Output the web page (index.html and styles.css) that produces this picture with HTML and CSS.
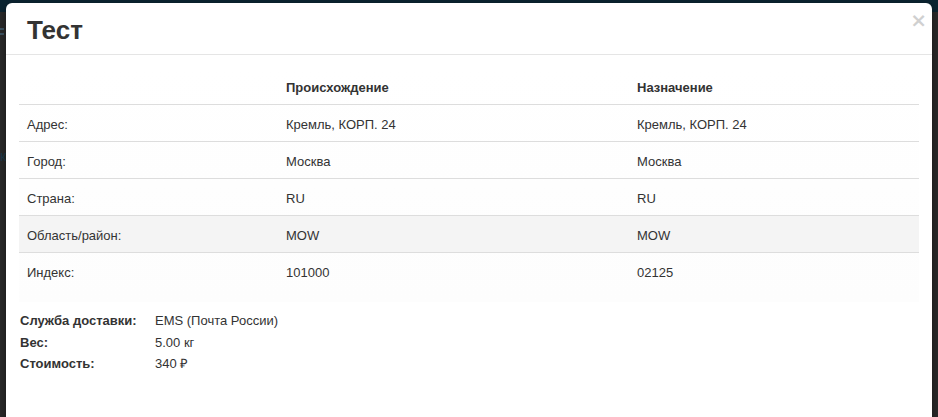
FILE: index.html
```html
<!DOCTYPE html>
<html lang="ru">
<head>
<meta charset="utf-8">
<title>Тест</title>
<link rel="stylesheet" href="styles.css">
</head>
<body>
<div class="backdrop">
  <div class="backdrop-bar"></div>
  <div class="backdrop-icon"></div>
  <div class="backdrop-text">к</div>
</div>
<div class="modal">
  <div class="modal-header">
    <h3 class="modal-title">Тест</h3>
    <button class="close" type="button">×</button>
  </div>
  <div class="modal-body">
    <div class="table-wrap">
      <table class="table">
        <colgroup>
          <col class="c1"><col class="c2"><col class="c3">
        </colgroup>
        <thead>
          <tr><th></th><th>Происхождение</th><th>Назначение</th></tr>
        </thead>
        <tbody>
          <tr><td>Адрес:</td><td>Кремль, КОРП. 24</td><td>Кремль, КОРП. 24</td></tr>
          <tr><td>Город:</td><td>Москва</td><td>Москва</td></tr>
          <tr><td>Страна:</td><td>RU</td><td>RU</td></tr>
          <tr class="striped"><td>Область/район:</td><td>MOW</td><td>MOW</td></tr>
          <tr><td>Индекс:</td><td>101000</td><td>02125</td></tr>
        </tbody>
      </table>
    </div>
    <dl class="info">
      <dt>Служба доставки:</dt><dd>EMS (Почта России)</dd>
      <dt>Вес:</dt><dd>5.00 кг</dd>
      <dt>Стоимость:</dt><dd>340 ₽</dd>
    </dl>
  </div>
</div>
</body>
</html>
```
FILE: styles.css
```css
html, body {
  margin: 0;
  height: 100%;
}
body {
  background: #2a2a2a;
  font-family: "Liberation Sans", Arial, sans-serif;
  font-size: 13px;
  color: #333;
  overflow: hidden;
}
.backdrop {
  height: 100%;
}
.backdrop-bar {
  height: 12px;
  background: #0b2431;
}
.backdrop-icon {
  margin-top: 16px;
  width: 4px;
  height: 7px;
  border-top: 2px solid #3e5564;
  border-bottom: 2px solid #3e5564;
  box-sizing: border-box;
}
.backdrop-text {
  margin-top: 111px;
  font-size: 14px;
  color: #1c3a4c;
  line-height: 20px;
}
.modal {
  position: absolute;
  top: 3px;
  left: 6px;
  width: 926px;
  height: 430px;
  background: #fff;
  border-radius: 6px;
  box-shadow: 0 3px 9px rgba(0,0,0,.5);
}
.modal-header {
  display: flex;
  align-items: flex-start;
  justify-content: space-between;
  padding: 12px 5px 0 21px;
  height: 39px;
  border-bottom: 1px solid #e5e5e5;
}
.modal-title {
  margin: 0;
  font-size: 26px;
  line-height: 30px;
  font-weight: bold;
  color: #333;
}
.close {
  border: 0;
  background: none;
  padding: 0;
  margin: -5px 0 0 0;
  font-family: "DejaVu Sans", sans-serif;
  font-size: 20px;
  font-weight: bold;
  line-height: 20px;
  color: #000;
  opacity: .18;
  cursor: pointer;
}
.modal-body {
  padding: 13px 13px 13px 13px;
}
.table-wrap {
  background: linear-gradient(#fff, #fdfdfd);
  padding-bottom: 13px;
}
.table {
  width: 100%;
  border-collapse: collapse;
  table-layout: fixed;
}
.c1 { width: 259px; }
.c2 { width: 351px; }
.table th, .table td {
  text-align: left;
  padding: 10px 8px 6px;
  line-height: 20px;
  vertical-align: top;
}
.table th {
  font-weight: bold;
  border-bottom: 1px solid #ddd;
}
.table td {
  border-top: 1px solid #ddd;
}
.table thead + tbody tr:first-child td {
  border-top: 0;
}
.table tr.striped td {
  background: #f4f4f4;
}
.info {
  display: grid;
  grid-template-columns: 135px 1fr;
  margin: 8px 0 0 1px;
  line-height: 21.5px;
}
.info dt {
  font-weight: bold;
}
.info dd {
  margin: 0;
}
```
